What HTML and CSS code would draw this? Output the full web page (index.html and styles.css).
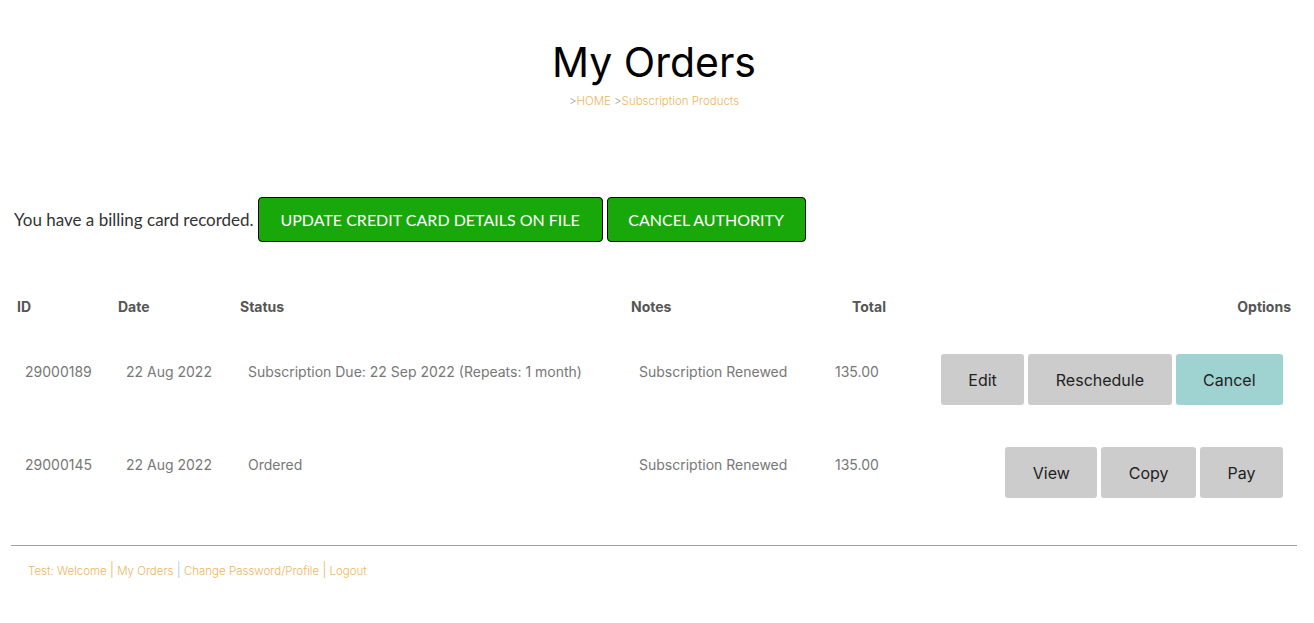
FILE: index.html
```html
<!DOCTYPE html>
<html>
<head>
<meta charset="utf-8">
<title>My Orders</title>
<link rel="stylesheet" href="styles.css">
</head>
<body>
<div class="page">
  <header class="head">
    <h1 class="title">My Orders</h1>
    <div class="crumbs"><span class="gt">&gt;</span><a class="link" href="#">HOME</a> <span class="gt">&gt;</span><a class="link" href="#">Subscription Products</a></div>
  </header>

  <section class="billing">
    <span class="billing-text">You have a billing card recorded.</span>
    <button class="green-btn wide">UPDATE CREDIT CARD DETAILS ON FILE</button>
    <button class="green-btn narrow">CANCEL AUTHORITY</button>
  </section>

  <table class="orders">
    <colgroup>
      <col class="c-id"><col class="c-date"><col class="c-status"><col class="c-notes"><col class="c-total"><col class="c-opt">
    </colgroup>
    <thead>
      <tr>
        <th>ID</th><th>Date</th><th>Status</th><th>Notes</th><th class="right">Total</th><th class="right">Options</th>
      </tr>
    </thead>
    <tbody>
      <tr>
        <td>29000189</td>
        <td>22 Aug 2022</td>
        <td>Subscription Due: 22 Sep 2022 (Repeats: 1 month)</td>
        <td>Subscription Renewed</td>
        <td>135.00</td>
        <td class="opts"><div class="btns"><button class="gbtn">Edit</button><button class="gbtn">Reschedule</button><button class="gbtn teal">Cancel</button></div></td>
      </tr>
      <tr>
        <td>29000145</td>
        <td>22 Aug 2022</td>
        <td>Ordered</td>
        <td>Subscription Renewed</td>
        <td>135.00</td>
        <td class="opts"><div class="btns"><button class="gbtn">View</button><button class="gbtn">Copy</button><button class="gbtn">Pay</button></div></td>
      </tr>
    </tbody>
  </table>

  <hr class="rule">

  <footer class="foot">
    <span class="link">Test: </span><a class="link" href="#">Welcome</a><span class="sep">|</span><a class="link" href="#">My Orders</a><span class="sep blue">|</span><a class="link" href="#">Change Password/Profile</a><span class="sep">|</span><a class="link" href="#">Logout</a>
  </footer>
</div>
</body>
</html>
```

FILE: styles.css
```css
* { box-sizing: border-box; }
body {
  margin: 0;
  background: #fff;
  font-family: Inter, "Liberation Sans", sans-serif;
}
.page {
  padding: 0 15px 0 9px;
}
.head {
  text-align: center;
  padding-top: 37px;
}
.title {
  margin: 0;
  font-size: 41px;
  line-height: 50px;
  font-weight: 400;
  color: #000;
}
.crumbs {
  margin-top: 6px;
  font-size: 11.5px;
  line-height: 16px;
  font-weight: 300;
}
.gt { color: #999; }
.link {
  color: #f0b560;
  text-decoration: none;
}
.billing {
  margin-top: 88px;
  padding-left: 5px;
  display: flex;
  align-items: center;
  gap: 4px;
}
.billing-text {
  font-family: Lato, "Open Sans", sans-serif;
  font-size: 17px;
  color: #333;
}
.green-btn {
  height: 45px;
  background: #19a80a;
  color: #fff;
  border: 1px solid #000;
  border-radius: 4px;
  font-family: Lato, "Open Sans", sans-serif;
  font-size: 16px;
  padding: 0;
  white-space: nowrap;
  text-align: center;
}
.green-btn.wide { width: 345px; }
.green-btn.narrow { width: 199px; }
.orders {
  margin-top: 55px;
  width: 1290px;
  border-collapse: collapse;
  table-layout: fixed;
}
.c-id { width: 101px; }
.c-date { width: 122px; }
.c-status { width: 391px; }
.c-notes { width: 196px; }
.c-total { width: 75px; }
.c-opt { width: 405px; }
.orders th {
  text-align: left;
  font-size: 14px;
  line-height: 20px;
  font-weight: 700;
  color: #555;
  padding: 0 8px 29px;
}
.orders th.right { text-align: right; }
.orders td {
  vertical-align: top;
  font-size: 14px;
  line-height: 20px;
  color: #777;
  padding: 16px 16px 0;
  white-space: nowrap;
}
.orders td.opts {
  padding: 8px 16px 34px;
}
.btns {
  display: flex;
  justify-content: flex-end;
  gap: 4px;
}
.gbtn {
  height: 51px;
  padding: 0 27.5px;
  background: #cccccc;
  border: none;
  border-radius: 3px;
  font-family: Inter, "Liberation Sans", sans-serif;
  font-size: 16px;
  color: #222;
}
.gbtn.teal { background: #9ed3d2; }
.rule {
  margin: 13px 0 0 2px;
  width: 1286px;
  border: none;
  border-top: 1px solid #a0a0a0;
  height: 0;
}
.foot {
  margin-top: 16px;
  padding-left: 19px;
  font-size: 11.5px;
  line-height: 16px;
  font-weight: 300;
}
.sep {
  color: #f0b560;
  margin: 0 3px;
  font-size: 14px;
}
.sep.blue { color: #9fd0e8; }
```
